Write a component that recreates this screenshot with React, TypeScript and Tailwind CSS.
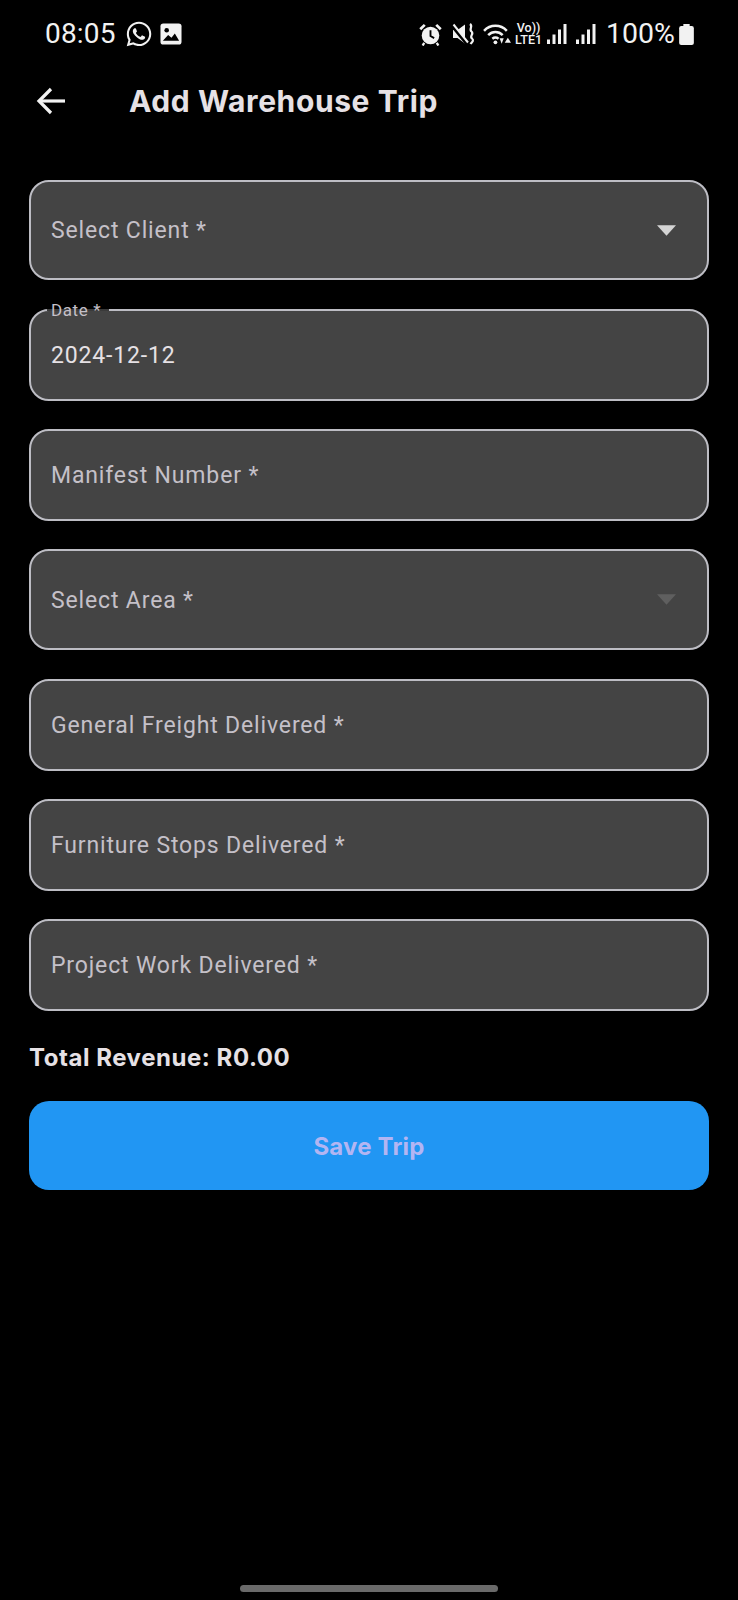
import { FaWhatsapp } from "react-icons/fa";

function ImageIcon() {
  return (
    <svg width="22" height="22" viewBox="0 0 23 23">
      <rect x="0.5" y="0.5" width="22" height="22" rx="3" fill="#f2f2f2" />
      <circle cx="7" cy="7.5" r="2.4" fill="#000" />
      <path d="M3 18.5L8.5 12.5L12 15.5L15.5 11L20 18.5Z" fill="#000" />
    </svg>
  );
}

function AlarmIcon() {
  return (
    <svg width="23" height="23" viewBox="0 0 22 22" fill="none">
      <circle cx="11" cy="12" r="8.4" fill="#f2f2f2" />
      <path d="M11 7V12.5L14.5 14.5" stroke="#000" strokeWidth="1.8" />
      <path d="M1.2 6L5.5 1.8M20.8 6L16.5 1.8" stroke="#f2f2f2" strokeWidth="2.6" />
      <path d="M5 19L3.5 21.5M17 19L18.5 21.5" stroke="#f2f2f2" strokeWidth="2.2" />
    </svg>
  );
}

function MuteIcon() {
  return (
    <svg width="24" height="24" viewBox="0 0 24 24" fill="none">
      <path d="M1 8H5.5L13 2.5V21.5L5.5 16H1Z" fill="#f2f2f2" />
      <path d="M0 3.5L15 22" stroke="#000" strokeWidth="3.4" />
      <path d="M1.5 2.5L16 20.5" stroke="#f2f2f2" strokeWidth="2" />
      <path d="M18 2C21.5 4.5 16.5 7 19.5 9.5C22.5 12 17 14 20 16.5C22.5 18.5 19.5 20.5 18.5 22" stroke="#f2f2f2" strokeWidth="2.2" />
    </svg>
  );
}

function WifiIcon() {
  return (
    <svg width="29" height="24" viewBox="0 0 28 22" fill="none">
      <path d="M1 8C7 1.5 17 1.5 23 8" stroke="#f2f2f2" strokeWidth="2.4" />
      <path d="M5 12C9 8 15 8 19 12" stroke="#f2f2f2" strokeWidth="2.4" />
      <path d="M9 15.5C11 14 13 14 15 15.5" stroke="#f2f2f2" strokeWidth="2.4" />
      <circle cx="12" cy="19" r="1.8" fill="#f2f2f2" />
      <path d="M16 15H20L18 20.5Z" fill="#f2f2f2" />
      <path d="M21 19.5L24 14.5L27 19.5Z" fill="#f2f2f2" />
    </svg>
  );
}

function SignalIcon() {
  return (
    <svg width="20" height="20" viewBox="0 0 20 20" fill="#f2f2f2">
      <rect x="0" y="15.5" width="3" height="4.5" />
      <rect x="5.5" y="10.5" width="3" height="9.5" />
      <rect x="11" y="5.5" width="3" height="14.5" />
      <rect x="16.5" y="0" width="3" height="20" />
    </svg>
  );
}

function BatteryIcon() {
  return (
    <svg width="15" height="21" viewBox="0 0 14 20" fill="#f2f2f2">
      <rect x="4" y="0" width="6" height="3" />
      <rect x="0" y="2" width="14" height="18" rx="2" />
    </svg>
  );
}

function StatusBar() {
  return (
    <div className="flex h-[68px] items-center pl-[45px] pr-[44px] text-[#f2f2f2] font-['Roboto',sans-serif]">
      <span className="text-[28px] leading-none tracking-[0.2px]">08:05</span>
      <FaWhatsapp className="ml-[9px] text-[28px]" />
      <div className="ml-[7px]">
        <ImageIcon />
      </div>
      <div className="ml-auto flex items-center">
        <div className="mr-[1px]">
          <AlarmIcon />
        </div>
        <div className="ml-[9px]">
          <MuteIcon />
        </div>
        <div className="ml-[7px]">
          <WifiIcon />
        </div>
        <div className="ml-[3px] flex w-[27px] flex-col items-center text-[12.5px] font-medium leading-[12px]">
          <span>Vo))</span>
          <span>LTE1</span>
        </div>
        <div className="ml-[5px]">
          <SignalIcon />
        </div>
        <div className="ml-[9px]">
          <SignalIcon />
        </div>
        <span className="ml-[10px] text-[28.5px] leading-none">100%</span>
        <div className="ml-[4px]">
          <BatteryIcon />
        </div>
      </div>
    </div>
  );
}

function Caret({ dim }: { dim?: boolean }) {
  return (
    <svg width="19" height="11" viewBox="0 0 20 11" className="ml-auto">
      <path d="M0 0H20L10 11Z" fill={dim ? "#5f5f5f" : "#d4d4d4"} />
    </svg>
  );
}

function Field({ label, height = "h-[92px]", caret, dim }: { label: string; height?: string; caret?: boolean; dim?: boolean }) {
  return (
    <div className={`flex items-center rounded-[20px] border-2 border-[#bdbdc4] bg-[#444444] pl-[20px] pr-[31px] ${height}`}>
      <span className="pt-[3px] font-['Roboto',sans-serif] text-[23px] tracking-[0.85px] text-[#c4c0c8]">{label}</span>
      {caret && <Caret dim={dim} />}
    </div>
  );
}

function DateField() {
  return (
    <div className="relative flex h-[92px] items-center rounded-[20px] border-2 border-[#bdbdc4] bg-[#444444] pl-[20px]">
      <span className="absolute -top-[2px] left-[16px] h-[2px] w-[62px] bg-[#3a3a3a]" />
      <span className="absolute -top-[11px] left-[20px] font-['Roboto',sans-serif] text-[17px] leading-[20px] tracking-[0.6px] text-[#c4c0c8]">
        Date *
      </span>
      <span className="pt-[3px] font-['Roboto',sans-serif] text-[23px] tracking-[0.85px] text-[#e6e1e5]">2024-12-12</span>
    </div>
  );
}

export default function App() {
  return (
    <div className="flex min-h-[1600px] w-[738px] flex-col bg-black">
      <StatusBar />
      <div className="flex h-[66px] items-center pl-[36px]">
        <svg width="30" height="28" viewBox="0 0 30 28" fill="none" stroke="#f2f2f2" strokeWidth="3.2">
          <path d="M29 14H3" />
          <path d="M15 2L3 14L15 26" />
        </svg>
        <h1 className="ml-[63px] font-['Inter',sans-serif] text-[30px] font-bold tracking-[0.6px] text-[#e6e1e5]">
          Add Warehouse Trip
        </h1>
      </div>
      <div className="mt-[46px] flex flex-col px-[29px]">
        <div className="flex flex-col gap-[28px]">
          <Field label="Select Client *" height="mb-[1px] h-[100px]" caret />
          <DateField />
          <Field label="Manifest Number *" />
          <Field label="Select Area *" height="mb-[1px] h-[101px]" caret dim />
          <Field label="General Freight Delivered *" />
          <Field label="Furniture Stops Delivered *" />
          <Field label="Project Work Delivered *" />
        </div>
        <p className="mt-[31px] font-['Inter',sans-serif] text-[24px] font-bold leading-[32px] tracking-[0.55px] text-[#e6e1e5]">
          Total Revenue: R0.00
        </p>
        <button className="mt-[27px] h-[89px] rounded-[20px] bg-[#2196f3] pt-[2px] font-['Inter',sans-serif] text-[24px] font-bold tracking-[0.2px] text-[#b3b5f2]">
          Save Trip
        </button>
      </div>
      <div className="mt-auto mb-[8px] h-[7px] w-[258px] self-center rounded-full bg-[#6a6a6a]" />
    </div>
  );
}
